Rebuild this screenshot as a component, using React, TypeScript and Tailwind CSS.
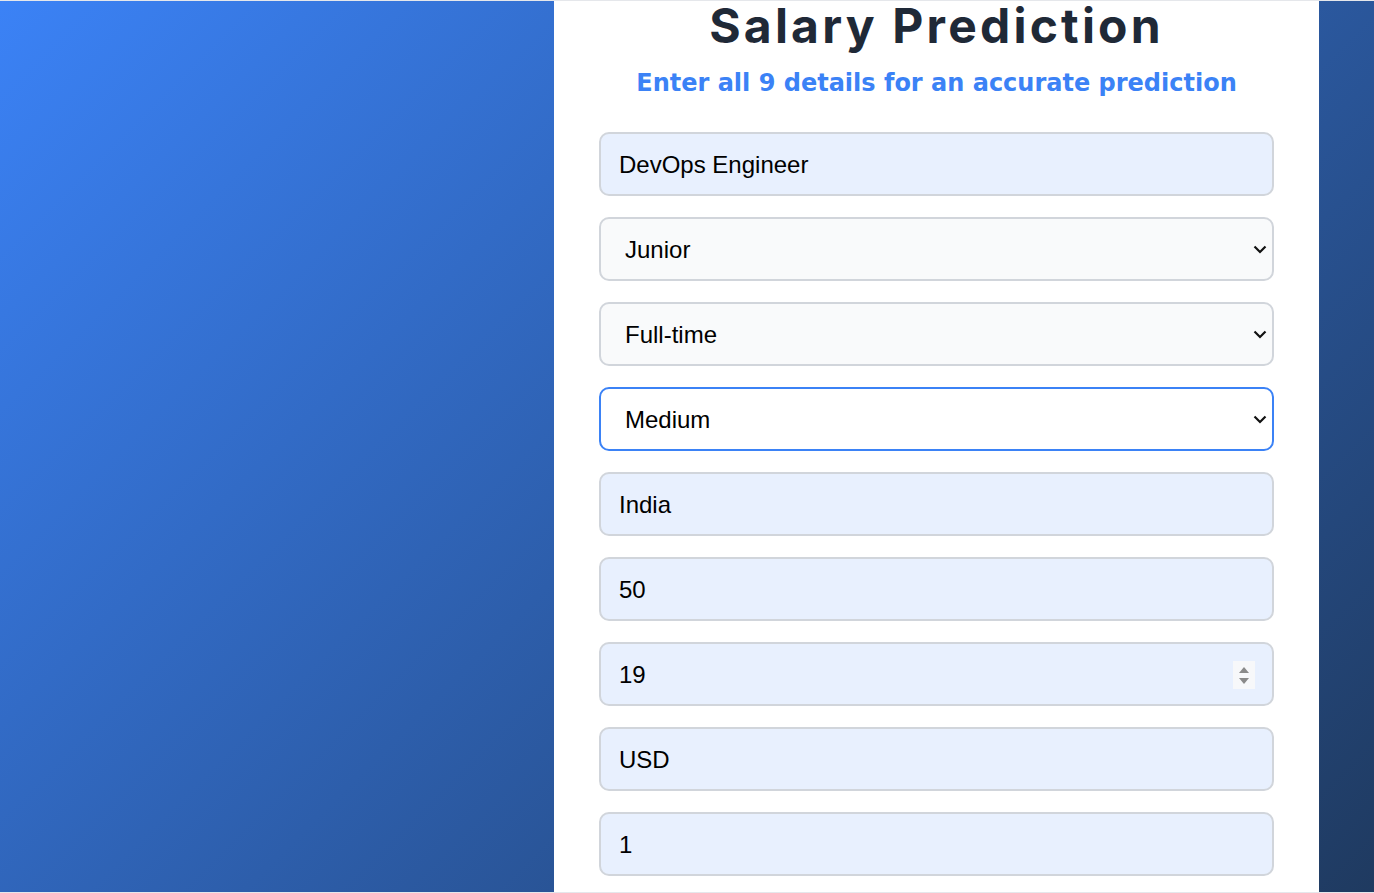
import { useState } from 'react'

const inputBase =
  'h-[64px] w-full rounded-[10px] border-2 px-[18px] pt-[2px] text-[24px] text-black outline-none'

const selectBase =
  'h-[64px] w-full appearance-none rounded-[10px] border-2 pt-[2px] pl-[24px] pr-[40px] text-[24px] text-black outline-none'

function Chevron() {
  return (
    <svg
      className="pointer-events-none absolute top-[28px] right-[7px]"
      width="14"
      height="9"
      viewBox="0 0 14 9"
      fill="none"
    >
      <path d="M1.5 1.5 7 7l5.5-5.5" stroke="#111" strokeWidth="2.2" />
    </svg>
  )
}

export default function App() {
  const [form, setForm] = useState({
    jobTitle: 'DevOps Engineer',
    experience: 'Junior',
    employment: 'Full-time',
    companySize: 'Medium',
    location: 'India',
    remote: '50',
    age: '19',
    currency: 'USD',
    years: '1',
  })

  const set = (key: keyof typeof form) => (e: { target: { value: string } }) =>
    setForm({ ...form, [key]: e.target.value })

  return (
    <div
      className="grid h-[893px] grid-cols-[554px_765px_1fr] overflow-hidden border-y border-[#e5e7eb] bg-[linear-gradient(135deg,#3b82f6,#1f3a60)]"
      style={{ fontFamily: '"Liberation Sans", Arial, sans-serif' }}
    >
      <div />

      {/* Form card */}
      <div className="bg-white px-[45px]">
        <h1 className="mt-[1px] text-center font-['Inter',sans-serif] text-[48px] font-bold leading-none tracking-[3.2px] text-[#1f2937]">
          Salary Prediction
        </h1>
        <p className="mt-[17px] text-center font-['DejaVu_Sans',sans-serif] text-[24px] font-bold leading-[32px] text-[#3b82f6]">
          Enter all 9 details for an accurate prediction
        </p>

        <form className="mt-[33px] flex flex-col gap-[21px]">
          <input
            type="text"
            value={form.jobTitle}
            onChange={set('jobTitle')}
            className={`${inputBase} border-[#d1d5db] bg-[#e8f0fe]`}
          />
          <div className="relative">
            <select
              value={form.experience}
              onChange={set('experience')}
              className={`${selectBase} border-[#d1d5db] bg-[#f9fafb]`}
            >
              <option>Entry</option>
              <option>Junior</option>
              <option>Mid</option>
              <option>Senior</option>
            </select>
            <Chevron />
          </div>
          <div className="relative">
            <select
              value={form.employment}
              onChange={set('employment')}
              className={`${selectBase} border-[#d1d5db] bg-[#f9fafb]`}
            >
              <option>Full-time</option>
              <option>Part-time</option>
              <option>Contract</option>
              <option>Freelance</option>
            </select>
            <Chevron />
          </div>
          <div className="relative">
            <select
              value={form.companySize}
              onChange={set('companySize')}
              className={`${selectBase} border-[#3b82f6] bg-white`}
            >
              <option>Small</option>
              <option>Medium</option>
              <option>Large</option>
            </select>
            <Chevron />
          </div>
          <input
            type="text"
            value={form.location}
            onChange={set('location')}
            className={`${inputBase} border-[#d1d5db] bg-[#e8f0fe]`}
          />
          <input
            type="text"
            value={form.remote}
            onChange={set('remote')}
            className={`${inputBase} border-[#d1d5db] bg-[#e8f0fe]`}
          />
          <div className="relative">
            <input
              type="text"
              value={form.age}
              onChange={set('age')}
              className={`${inputBase} border-[#d1d5db] bg-[#e8f0fe]`}
            />
            {/* spinner */}
            <div className="absolute top-[19px] right-[19px] flex h-[28px] w-[22px] flex-col items-center justify-center gap-[5px] bg-[#f7f8fa]">
              <span className="h-0 w-0 border-x-[5px] border-b-[6px] border-x-transparent border-b-[#8a8a8a]" />
              <span className="h-0 w-0 border-x-[5px] border-t-[6px] border-x-transparent border-t-[#8a8a8a]" />
            </div>
          </div>
          <input
            type="text"
            value={form.currency}
            onChange={set('currency')}
            className={`${inputBase} border-[#d1d5db] bg-[#e8f0fe]`}
          />
          <input
            type="text"
            value={form.years}
            onChange={set('years')}
            className={`${inputBase} border-[#d1d5db] bg-[#e8f0fe]`}
          />
        </form>
      </div>

      <div />
    </div>
  )
}
